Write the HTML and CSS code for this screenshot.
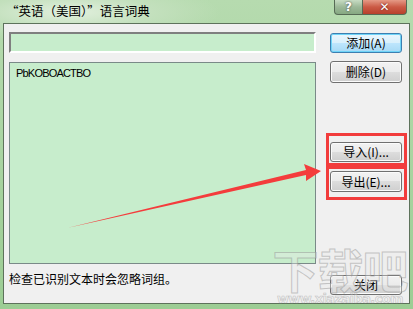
FILE: index.html
```html
<!DOCTYPE html>
<html>
<head>
  <meta charset="utf-8" />
  <title>“英语（美国）”语言词典</title>
  <link rel="stylesheet" href="styles.css">
</head>
<body>
<div class="win">
  <div class="titlebar">
    <span class="title">“英语（美国）”语言词典</span>
    <div class="caps">
      <span class="cap help">?</span>
      <span class="cap close">✕</span>
    </div>
  </div>
  <div class="client">
    <div class="leftcol">
      <div class="edit"></div>
      <div class="list">
        <div class="item">PbKOBOACTBO</div>
      </div>
      <p class="note">检查已识别文本时会忽略词组。</p>
    </div>
    <div class="rightcol">
      <button class="btn btn-add focus">添加(A)</button>
      <button class="btn btn-del">删除(D)</button>
      <button class="btn btn-imp">导入(I)...</button>
      <button class="btn btn-exp">导出(E)...</button>
      <button class="btn btn-close">关闭</button>
    </div>
  </div>

  <!-- 标注 -->
  <div class="mark mark1"></div>
  <div class="mark mark2"></div>
  <svg class="arrow" width="413" height="309" viewBox="0 0 413 309">
    <polygon points="67,228 306,170 304,164 321,171 306,181 306,175" fill="#f43c3c" />
  </svg>
  <div class="wm">
    <span class="wm-big">下载吧</span>
    <span class="wm-url">www.xiazaiba.com</span>
  </div>
</div>
</body>
</html>
```
FILE: styles.css
```css
body {
  margin: 0;
  padding: 0;
  background: #9fcf98;
  font-family: "Noto Sans CJK SC", sans-serif;
  font-size: 12px;
}
.win {
  position: relative;
  width: 413px;
  height: 309px;
  overflow: hidden;
  background: radial-gradient(ellipse 150px 30px at 70px 12px, #e2f0de 0%, #c3e0bd 55%, rgba(160,207,152,0) 100%),
              linear-gradient(#b6dbaf, #9ccd94);
  display: flex;
  flex-direction: column;
}
.titlebar {
  height: 23px;
  display: flex;
  justify-content: space-between;
  align-items: flex-start;
}
.title {
  margin: 2px 0 0 6px;
  line-height: 18px;
  color: #000;
  font-size: 12.5px;
}
.caps {
  display: flex;
  margin-right: 6px;
}
.cap {
  height: 14px;
  line-height: 14px;
  text-align: center;
  color: #fff;
  font-family: "DejaVu Sans", sans-serif;
  font-weight: bold;
  border: 1px solid #566a55;
  border-top: none;
}
.help {
  width: 27px;
  border-radius: 0 0 0 4px;
  background: linear-gradient(#c7dcc3, #9cb898 50%, #86a882);
  font-size: 12px;
  text-shadow: 0 0 2px #333;
}
.close {
  width: 43px;
  border-left: none;
  border-radius: 0 0 4px 0;
  background: linear-gradient(#e59a86, #cb5a45 50%, #b8402c);
  font-size: 12px;
  text-shadow: 0 0 2px #500;
}
.client {
  margin: 0 3px;
  height: 281px;
  border: 1px solid #5d725b;
  background: #f0f0f0;
  display: flex;
  padding: 8px 0 0 5px;
  box-sizing: border-box;
}
.leftcol {
  width: 307px;
  display: flex;
  flex-direction: column;
}
.edit {
  height: 21px;
  box-sizing: border-box;
  border: 2px solid #fff;
  border-top-color: #7f7f7f;
  border-left-color: #7f7f7f;
  background: #c7edcc;
}
.list {
  margin-top: 9px;
  height: 202px;
  box-sizing: border-box;
  border: 1px solid #7a8a88;
  background: #c7edcc;
  padding: 4px 6px;
}
.item {
  font-family: "Liberation Sans", sans-serif;
  font-size: 11px;
  letter-spacing: -0.8px;
  line-height: 13px;
}
.note {
  margin: 7px 0 0 0;
  line-height: 15px;
}
.rightcol {
  margin-left: 14px;
  width: 72px;
  display: flex;
  flex-direction: column;
}
.btn {
  width: 72px;
  height: 20px;
  padding: 0;
  font-family: "Noto Sans CJK SC", sans-serif;
  font-size: 12px;
  color: #000;
  border: 1px solid #707070;
  border-radius: 3px;
  background: linear-gradient(#f2f2f2, #ebebeb 50%, #dddddd 50%, #cfcfcf);
  box-shadow: inset 0 0 0 1px #fbfbfb;
  line-height: 16px;
}
.focus {
  border-color: #3c7fb1;
  background: linear-gradient(#eaf6fd, #d9f0fc 50%, #bee6fd 50%, #a7d9f5);
  box-shadow: inset 0 0 0 1px #6fd4f8;
}
.btn-add { margin-top: 1px; }
.btn-del { margin-top: 8px; height: 22px; }
.btn-imp { margin-top: 59px; }
.btn-exp { margin-top: 9px; height: 21px; }
.btn-close { margin-top: 83px; }

.mark {
  position: absolute;
  border: 3px solid #f23c3c;
  box-sizing: border-box;
  left: 326px;
  width: 81px;
}
.mark1 { top: 133px; height: 33px; }
.mark2 { top: 166px; height: 34px; }
.arrow {
  position: absolute;
  left: 0;
  top: 0;
}
.wm {
  position: absolute;
  left: 270px;
  top: 243px;
  width: 140px;
  display: flex;
  flex-direction: column;
  align-items: center;
  pointer-events: none;
}
.wm-big {
  font-size: 46px;
  line-height: 50px;
  font-weight: bold;
  color: rgba(235,235,235,0.35);
  -webkit-text-stroke: 1px rgba(150,150,150,0.5);
  letter-spacing: -1px;
}
.wm-url {
  font-family: "DejaVu Sans", sans-serif;
  font-size: 13px;
  line-height: 11px;
  font-weight: bold;
  color: rgba(235,235,235,0.3);
  -webkit-text-stroke: 0.6px rgba(150,150,150,0.5);
  letter-spacing: -0.6px;
}
```
